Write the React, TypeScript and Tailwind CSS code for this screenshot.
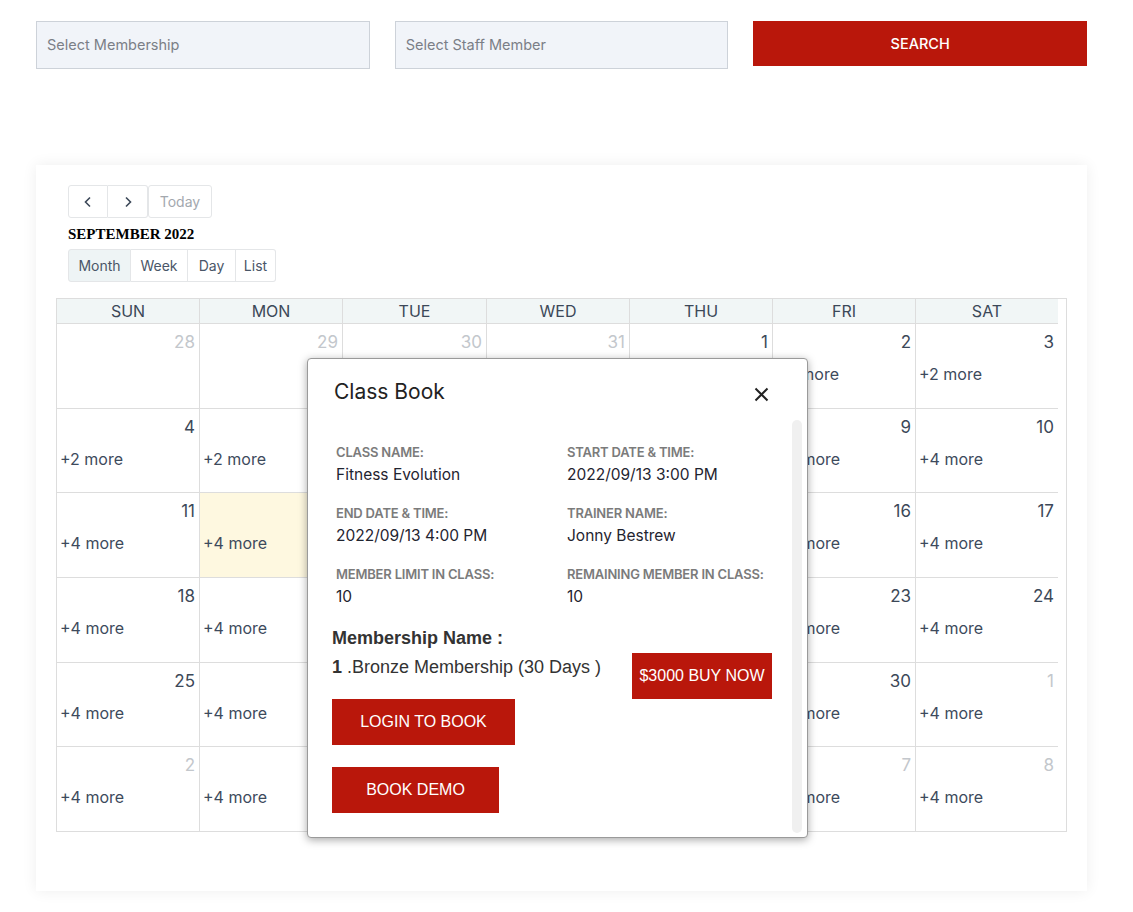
import React from "react";

const RED = "bg-[#b9170b]";
const COLS = "grid grid-cols-[143px_143px_144px_143px_143px_143px_142px]";

type Cell = { d: string; other?: boolean; more?: number; today?: boolean };

const rows: Cell[][] = [
  [
    { d: "28", other: true },
    { d: "29", other: true },
    { d: "30", other: true },
    { d: "31", other: true },
    { d: "1" },
    { d: "2", more: 2 },
    { d: "3", more: 2 },
  ],
  [
    { d: "4", more: 2 },
    { d: "5", more: 2 },
    { d: "6", more: 2 },
    { d: "7", more: 2 },
    { d: "8", more: 2 },
    { d: "9", more: 4 },
    { d: "10", more: 4 },
  ],
  [
    { d: "11", more: 4 },
    { d: "12", more: 4, today: true },
    { d: "13", more: 4 },
    { d: "14", more: 4 },
    { d: "15", more: 4 },
    { d: "16", more: 4 },
    { d: "17", more: 4 },
  ],
  [
    { d: "18", more: 4 },
    { d: "19", more: 4 },
    { d: "20", more: 4 },
    { d: "21", more: 4 },
    { d: "22", more: 4 },
    { d: "23", more: 4 },
    { d: "24", more: 4 },
  ],
  [
    { d: "25", more: 4 },
    { d: "26", more: 4 },
    { d: "27", more: 4 },
    { d: "28", more: 4 },
    { d: "29", more: 4 },
    { d: "30", more: 4 },
    { d: "1", other: true, more: 4 },
  ],
  [
    { d: "2", other: true, more: 4 },
    { d: "3", other: true, more: 4 },
    { d: "4", other: true, more: 4 },
    { d: "5", other: true, more: 4 },
    { d: "6", other: true, more: 4 },
    { d: "7", other: true, more: 4 },
    { d: "8", other: true, more: 4 },
  ],
];

const days = ["SUN", "MON", "TUE", "WED", "THU", "FRI", "SAT"];

function Field({ label, value }: { label: string; value: string }) {
  return (
    <div className="flex flex-col">
      <div className="text-[13px] font-semibold uppercase leading-[20px] text-[#7b7b7b] tracking-[-0.2px]">
        {label}
      </div>
      <div className="mt-[2px] text-[15.5px] leading-[22px] text-[#1f2430]">{value}</div>
    </div>
  );
}

export default function App() {
  return (
    <div
      className="relative w-[1133px] min-h-[912px] bg-white"
      style={{ fontFamily: "Inter, 'Open Sans', sans-serif" }}
    >
      <div className="pl-[36px] pr-[46px] pt-[21px]">
        <div className="grid grid-cols-3 gap-[25px] items-start">
          <div className="h-[48px] border border-[#cdd2d9] bg-[#f1f4f9] flex items-center pl-[10px] text-[14.5px] text-[#7b7f87]">
            Select Membership
          </div>
          <div className="h-[48px] border border-[#cdd2d9] bg-[#f1f4f9] flex items-center pl-[10px] text-[14.5px] text-[#7b7f87]">
            Select Staff Member
          </div>
          <div className={`h-[45px] ${RED} flex items-center justify-center text-[14.5px] font-medium text-white`}>
            SEARCH
          </div>
        </div>

        <div className="mt-[96px] h-[726px] bg-white shadow-[0_0_14px_rgba(0,0,0,0.07)] px-[20px] pt-[20px]">
          <div className="ml-[12px]">
            <div className="flex">
              <div className="w-[40px] h-[33px] border border-[#e4e6e8] rounded-l-[3px] flex items-center justify-center text-[#3c4858]">
                <svg width="14" height="14" viewBox="0 0 14 14" fill="none" stroke="currentColor" strokeWidth="1.6">
                  <path d="M9 2.5 L4.5 7 L9 11.5" />
                </svg>
              </div>
              <div className="w-[40px] h-[33px] border border-l-0 border-[#e4e6e8] rounded-r-[3px] flex items-center justify-center text-[#3c4858]">
                <svg width="14" height="14" viewBox="0 0 14 14" fill="none" stroke="currentColor" strokeWidth="1.6">
                  <path d="M5 2.5 L9.5 7 L5 11.5" />
                </svg>
              </div>
              <div className="w-[64px] h-[33px] border border-[#e4e6e8] rounded-[3px] flex items-center justify-center text-[14px] text-[#a3a8ae]">
                Today
              </div>
            </div>
            <div
              className="mt-[8px] text-[15px] font-bold leading-[17px] text-black"
              style={{ fontFamily: "'Liberation Serif', 'DejaVu Serif', serif" }}
            >
              SEPTEMBER 2022
            </div>
            <div className="mt-[6px] flex text-[14px] text-[#4a5668]">
              <div className="w-[63px] h-[33px] border border-[#e4e6e8] rounded-l-[3px] bg-[#eef4f5] flex items-center justify-center">
                Month
              </div>
              <div className="w-[57px] h-[33px] border border-l-0 border-[#e4e6e8] flex items-center justify-center">
                Week
              </div>
              <div className="w-[48px] h-[33px] border border-l-0 border-[#e4e6e8] flex items-center justify-center">
                Day
              </div>
              <div className="w-[40px] h-[33px] border border-l-0 border-[#e4e6e8] rounded-r-[3px] flex items-center justify-center">
                List
              </div>
            </div>
          </div>

          <div className="mt-[16px] w-[1011px] border border-[#dddddd]">
            <div className="w-[1001px]">
              <div className={`${COLS} h-[25px] bg-[#f1f6f6] border-b border-[#dddddd]`}>
                {days.map((d, i) => (
                  <div
                    key={d}
                    className={`flex items-center justify-center text-[16px] text-[#3c4858] ${i < 6 ? "border-r border-[#dddddd]" : ""}`}
                  >
                    {d}
                  </div>
                ))}
              </div>
              <div className="flex flex-col h-[507px]">
                {rows.map((r, ri) => (
                  <div
                    key={ri}
                    className={`${COLS} flex-1 ${ri < 5 ? "border-b border-[#dddddd]" : ""}`}
                  >
                    {r.map((c, ci) => (
                      <div
                        key={ci}
                        className={`flex flex-col ${ci < 6 ? "border-r border-[#dddddd]" : ""} ${c.today ? "bg-[#fef8e0]" : ""}`}
                      >
                        <div
                          className={`text-right pr-[4px] pt-[6px] text-[17px] leading-[24px] ${c.other ? "text-[#c3c7cc]" : "text-[#3c4858]"}`}
                        >
                          {c.d}
                        </div>
                        {c.more ? (
                          <div className="pl-[3px] mt-[10px] text-[16px] leading-[20px] text-[#3d4a5c]">
                            +{c.more} more
                          </div>
                        ) : null}
                      </div>
                    ))}
                  </div>
                ))}
              </div>
            </div>
          </div>
        </div>
      </div>

      {/* Modal */}
      <div className="absolute left-[307px] top-[358px] w-[501px] h-[480px] bg-white border border-[#9a9a9a] rounded-[4px] shadow-[0_2px_8px_rgba(0,0,0,0.35)]">
        <div className="flex items-center justify-between pl-[26px] pr-[38px] pt-[19px]">
          <div className="text-[21px] leading-[28px] text-[#222222]">Class Book</div>
          <svg width="15" height="15" viewBox="0 0 15 15" fill="none" stroke="#222" strokeWidth="2" className="mt-[4px]">
            <path d="M1.5 1.5 L13.5 13.5 M13.5 1.5 L1.5 13.5" />
          </svg>
        </div>
        <div className="absolute right-[5px] top-[61px] w-[10px] h-[413px] rounded-full bg-[#f0f0f0]" />
        <div className="pl-[28px] pr-[35px] pt-[36px]">
          <div className="grid grid-cols-[231px_1fr] gap-y-[17px]">
            <Field label="Class Name:" value="Fitness Evolution" />
            <Field label="Start Date & Time:" value="2022/09/13 3:00 PM" />
            <Field label="End Date & Time:" value="2022/09/13 4:00 PM" />
            <Field label="Trainer Name:" value="Jonny Bestrew" />
            <Field label="Member Limit in Class:" value="10" />
            <Field label="Remaining Member in Class:" value="10" />
          </div>
        </div>
        <div
          className="pl-[24px] pr-[35px] mt-[20px]"
          style={{ fontFamily: "'Liberation Sans', Arial, sans-serif" }}
        >
          <div className="flex justify-between items-start">
            <div>
              <div className="text-[18px] font-bold leading-[20px] text-[#333333]">Membership Name :</div>
              <div className="mt-[9px] text-[18px] leading-[20px] text-[#333333]">
                <span className="font-bold">1</span> .Bronze Membership (30 Days )
              </div>
            </div>
            <div className={`mt-[25px] w-[140px] h-[46px] ${RED} flex items-center justify-center text-[16px] text-white`}>
              $3000 BUY NOW
            </div>
          </div>
          <div className={`w-[183px] h-[46px] ${RED} flex items-center justify-center text-[16px] text-white`}>
            LOGIN TO BOOK
          </div>
          <div className={`mt-[22px] w-[167px] h-[46px] ${RED} flex items-center justify-center text-[16px] text-white`}>
            BOOK DEMO
          </div>
        </div>
      </div>
    </div>
  );
}
